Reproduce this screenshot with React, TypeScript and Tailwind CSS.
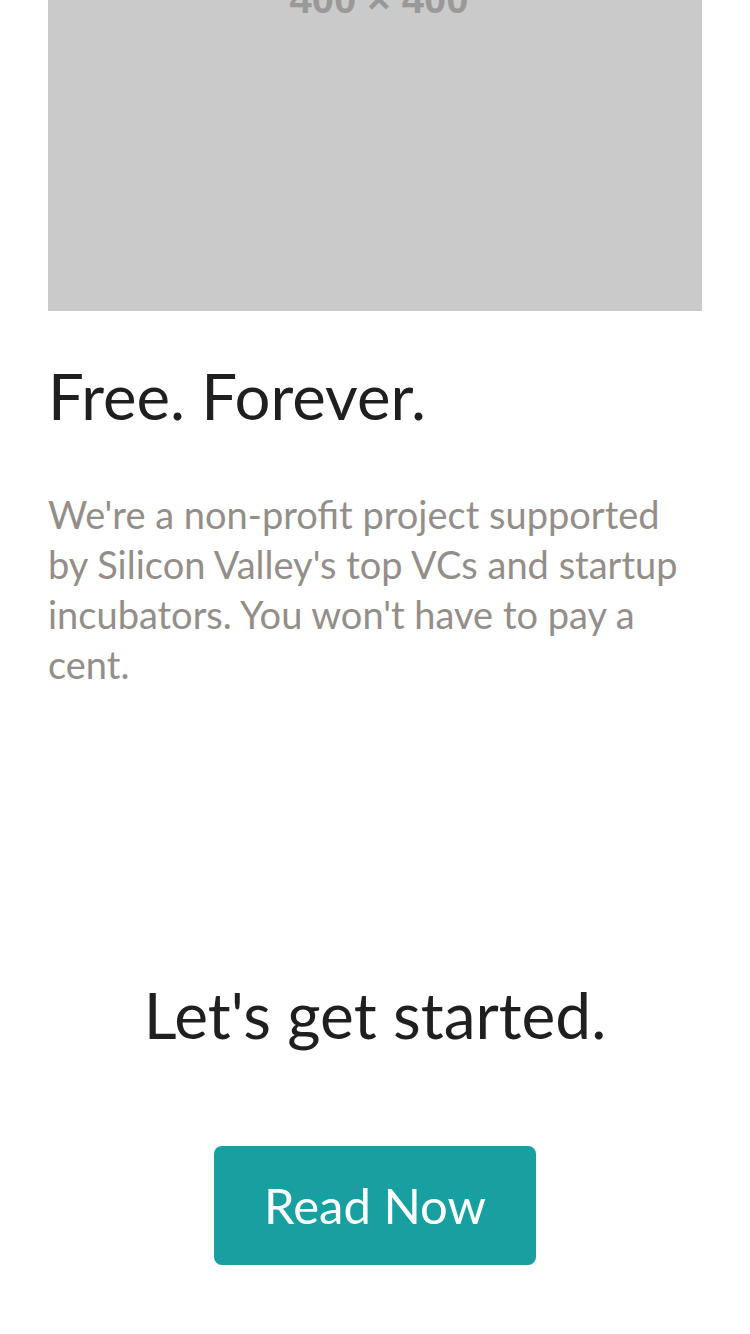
export default function App() {
  return (
    <div className="min-h-[1334px] overflow-hidden bg-white font-['Lato','Noto_Sans',sans-serif]">
      <div className="px-12">
        {/* Placeholder image, page is scrolled so its top is off screen */}
        <div className="-mt-[343px] flex h-[654px] w-full items-center justify-center bg-[#cacaca] pt-[30px] pl-[8px]">
          <span className="font-['Liberation_Sans',sans-serif] text-[40px] font-bold text-[#999999]">
            400 × 400
          </span>
        </div>

        {/* Feature */}
        <h2 className="mt-[47px] text-[63.5px] leading-[1.2] text-[#1f1f1f]">Free. Forever.</h2>
        <p className="mt-[55px] text-[38px] leading-[50px] text-[#948e8a]">
          We're a non-profit project supported by Silicon Valley's top VCs and startup incubators. You
          won't have to pay a cent.
        </p>
      </div>

      {/* CTA */}
      <div className="mt-[288px] flex flex-col items-center">
        <h2 className="text-[64px] leading-[1.2] text-[#1f1f1f]">Let's get started.</h2>
        <button className="mt-[92px] flex h-[119px] w-[322px] items-center justify-center rounded-lg bg-[#17a09f] text-[49px] text-white">
          Read Now
        </button>
      </div>
    </div>
  );
}
